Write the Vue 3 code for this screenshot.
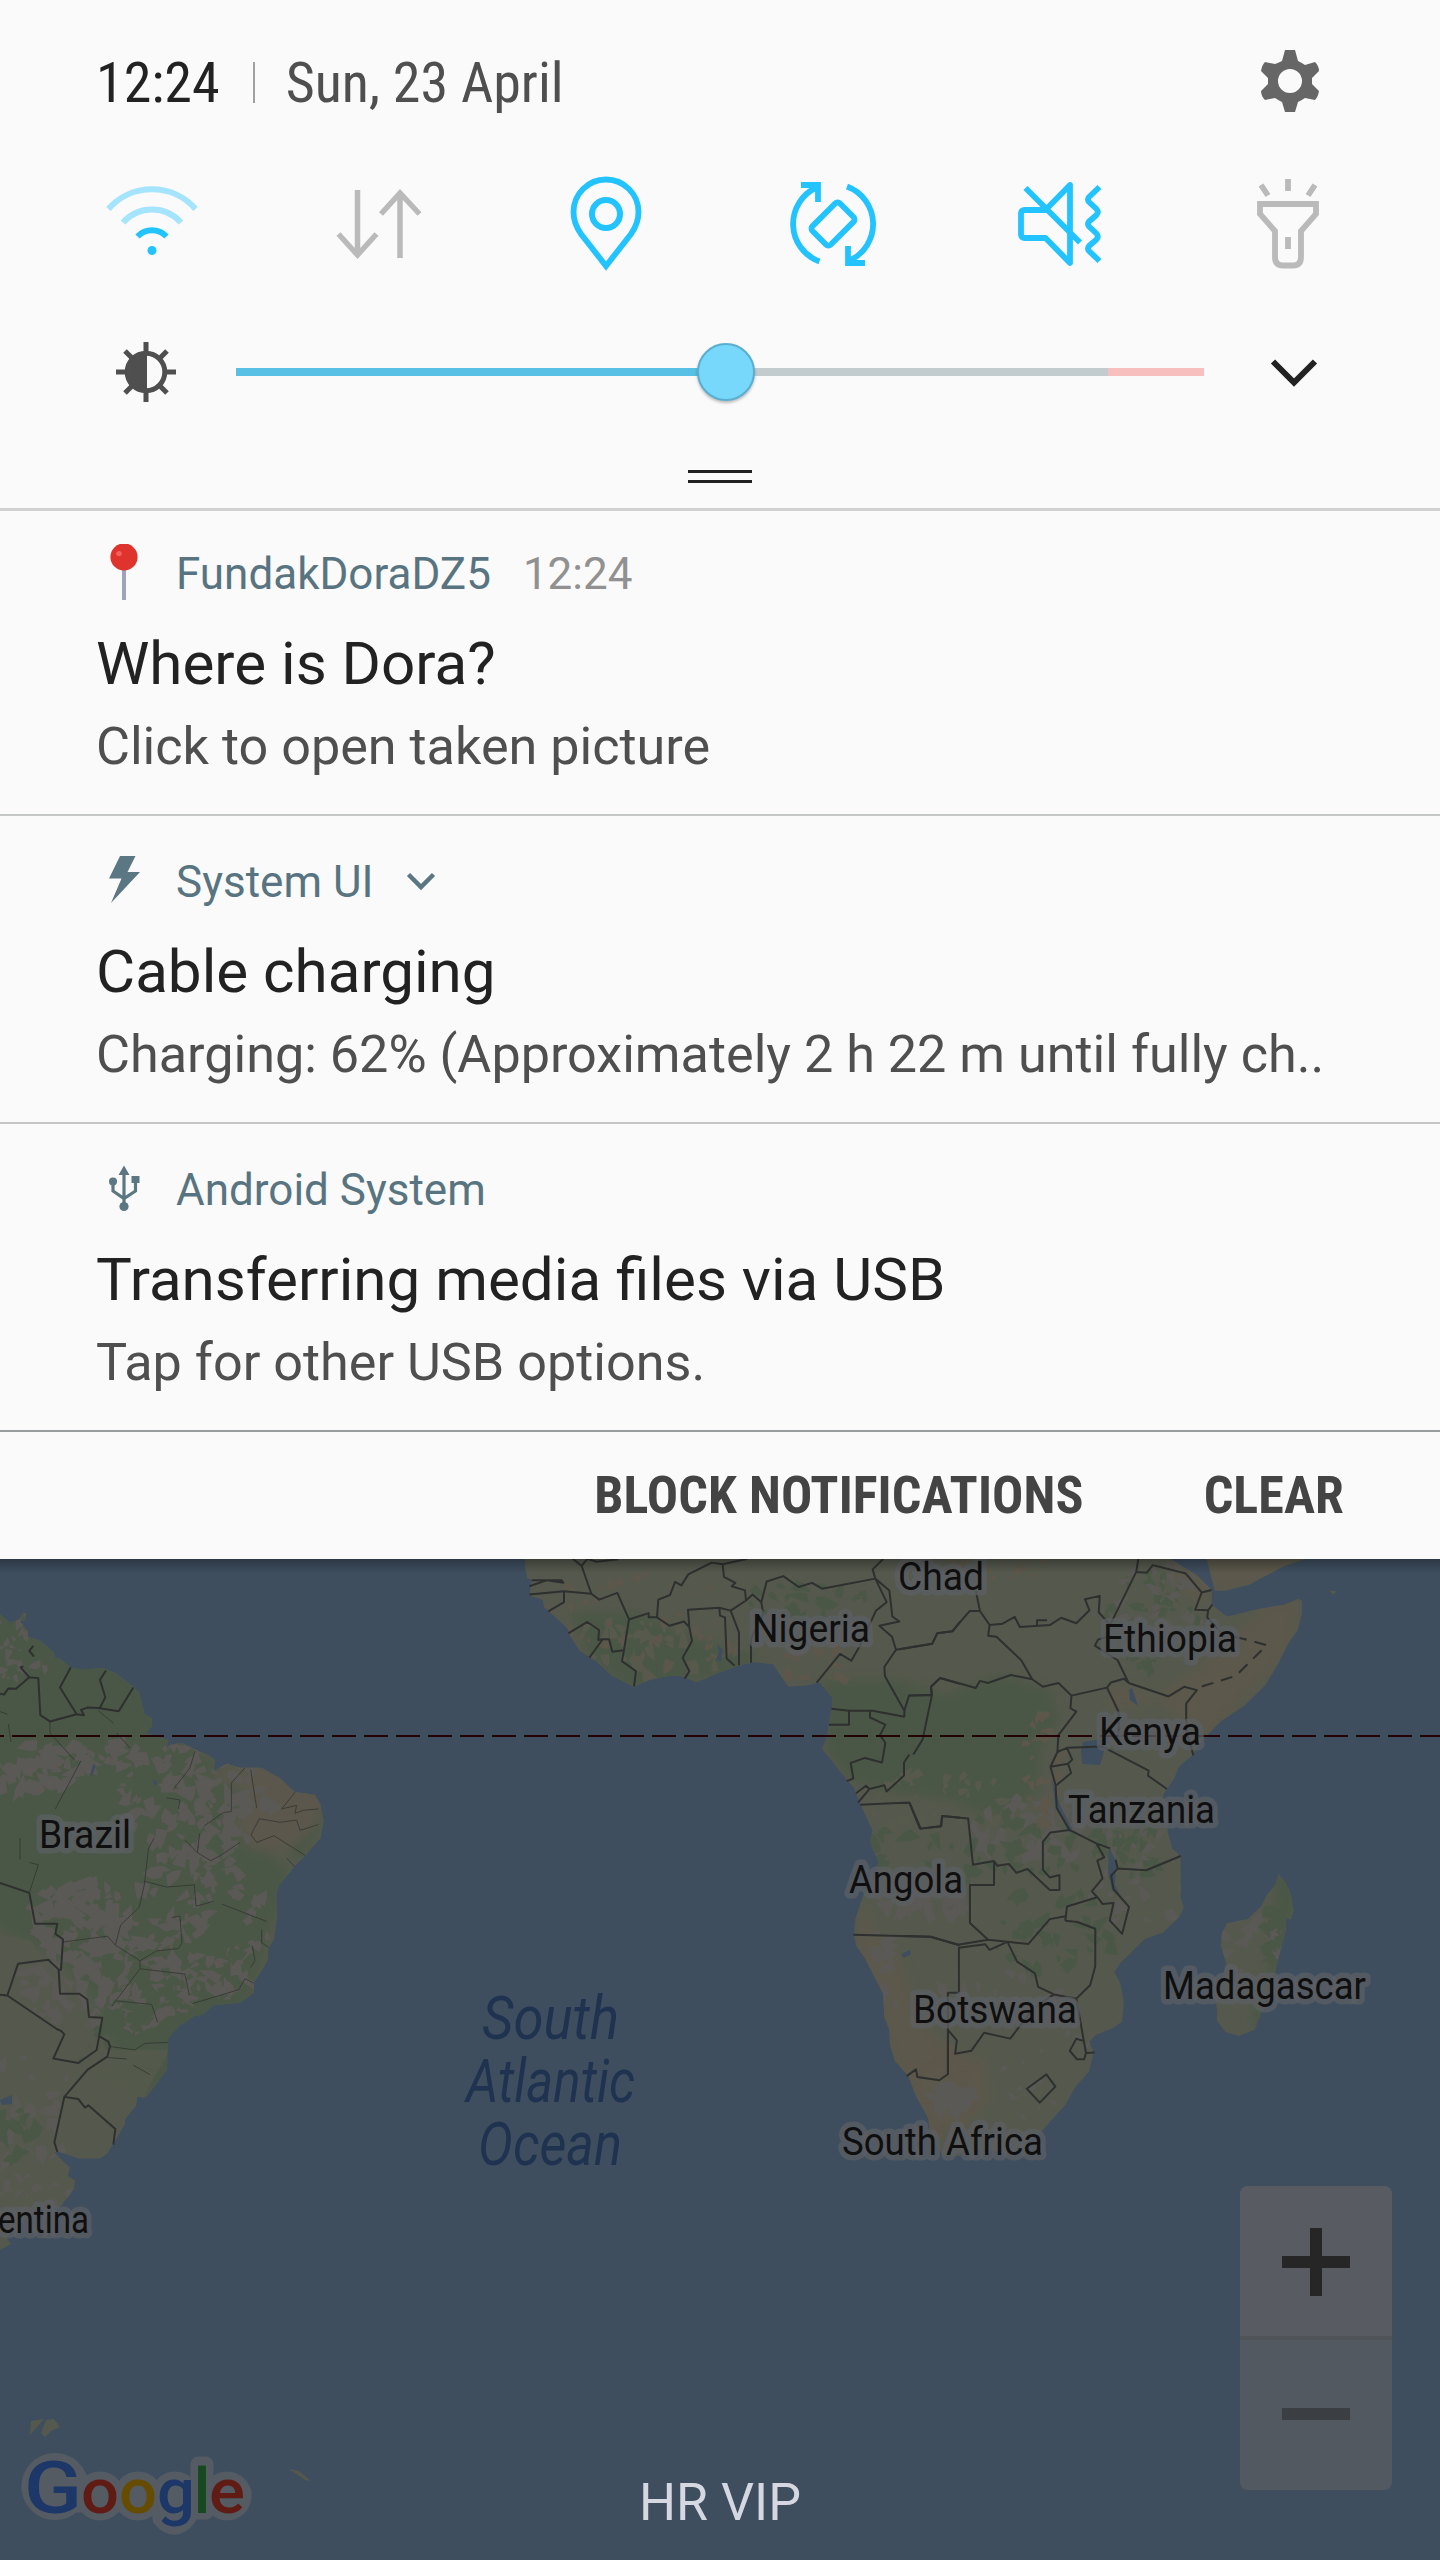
<script setup>
const notifications = [
  { id: 'dora', icon: 'pin', app: 'FundakDoraDZ5', time: '12:24', title: 'Where is Dora?', body: 'Click to open taken picture' },
  { id: 'charge', icon: 'bolt', app: 'System UI', expandable: true, title: 'Cable charging', body: 'Charging: 62% (Approximately 2 h 22 m until fully ch..' },
  { id: 'usb', icon: 'usb', app: 'Android System', title: 'Transferring media files via USB', body: 'Tap for other USB options.' },
]

const labels = [
  { text: 'Brazil', x: 39, y: 1848, w: 92 },
  { text: 'Argentina', x: -53, y: 2233, w: 142 },
  { text: 'Chad', x: 898, y: 1590, w: 86 },
  { text: 'Nigeria', x: 752, y: 1642, w: 118 },
  { text: 'Ethiopia', x: 1103, y: 1652, w: 134 },
  { text: 'Kenya', x: 1099, y: 1745, w: 102 },
  { text: 'Tanzania', x: 1068, y: 1823, w: 147 },
  { text: 'Angola', x: 849, y: 1893, w: 114 },
  { text: 'Botswana', x: 913, y: 2023, w: 164 },
  { text: 'Madagascar', x: 1163, y: 1999, w: 203 },
  { text: 'South Africa', x: 842, y: 2155, w: 201 },
]

const ocean = [
  { text: 'South', x: 482, y: 2039, w: 137 },
  { text: 'Atlantic', x: 466, y: 2102, w: 169 },
  { text: 'Ocean', x: 478, y: 2165, w: 144 },
]

const logo = [
  { ch: 'G', x: 24, w: 58, cls: 'cap blue' },
  { ch: 'o', x: 81, w: 38, cls: 'red' },
  { ch: 'o', x: 119, w: 38, cls: 'yellow' },
  { ch: 'g', x: 157, w: 38, cls: 'blue' },
  { ch: 'l', x: 193.5, w: 17, cls: 'green' },
  { ch: 'e', x: 209, w: 36, cls: 'red' },
]

// Coastlines: South America, western Africa, eastern Africa with Arabia and Madagascar, small islands.
const land = [
  { t: 'translate(0 1550) scale(.33333 .44643)', d: 'M0 143L30 163L60 155L68 140L78 143L78 155L60 160L82 180L85 195L120 202L162 230L165 243L178 242L212 263L250 268L310 264L350 277L400 306L418 320L433 366L455 377L455 395L440 410L470 418L505 425L500 445L475 468L510 437L545 432L600 452L622 458L645 470L640 495L682 478L720 488L785 488L838 510L885 542L945 548L962 572L971 607L962 645L915 685L885 708L838 750L829 770L831 825L822 872L805 892L803 920L762 970L762 992L720 1014L640 1020L608 1041L585 1043L540 1065L512 1087L503 1100L501 1165L437 1227L412 1224L408 1245L375 1275L375 1285L340 1330L322 1352L300 1363L235 1363L172 1347L163 1350L210 1383L203 1402L225 1412L222 1432L180 1472L100 1480L20 1540L32 1555L0 1568Z' },
  { t: 'translate(500 1550) scale(.33333 .42088)', d: 'M75 21L75 40L82 68L95 72L88 108L128 118L132 135L205 188L210 205L240 240L290 265L335 298L402 325L450 308L510 299L545 300L590 314L650 294L715 275L760 267L818 271L865 325L920 322L960 315L998 352L995 375L987 415L978 450L966 472L1040 545L1062 565L1080 603L1117 665L1110 695L1135 740L1120 790L1090 820L1065 880L1062 915L1068 940L1095 970L1150 1055L1153 1110L1168 1140L1170 1175L1185 1215L1225 1250L1250 1300L1285 1350L1290 1390L1330 1440L1380 1440L1380 21Z' },
  { t: 'translate(900 1550) scale(.34439 .42088)', d: 'M75 21L785 21L860 58L905 95L905 130L950 158L1040 140L1115 130L1158 116L1167 122L1167 150L1155 190L1125 225L1095 275L1060 322L1000 370L930 408L880 450L850 487L810 515L795 545L765 580L765 610L778 670L790 710L815 727L815 825L824 850L812 870L765 908L710 925L640 982L622 1003L640 1030L650 1075L645 1120L620 1135L570 1152L550 1168L562 1195L548 1240L510 1275L480 1318L410 1382L330 1430L200 1425L126 1440L87 1390ZM890 21L915 97L945 97L1015 82L1060 62L1115 38L1180 21ZM1245 96L1268 98L1258 106ZM1100 771L1120 790L1135 820L1143 858L1135 878L1120 875L1120 905L1108 940L1090 1000L1060 1075L1030 1140L983 1155L945 1145L920 1118L920 1090L912 1050L935 1020L948 985L932 940L935 910L950 886L1010 877L1050 845L1065 820L1090 795Z' },
  { t: 'translate(0 0)', d: 'M31 2421L44 2419L30 2435ZM46 2420L54 2419L60 2427L51 2431L45 2437L41 2433ZM289 2469L299 2471L311 2481L305 2480Z' },
]

// Vegetation patches: deterministic slivers scattered inside an ellipse.
function scatter(seed, cx, cy, rx, ry, count, size) {
  let s = seed * 7919
  const rnd = () => {
    s = (s * 16807) % 2147483647
    return s / 2147483647
  }
  let d = ''
  for (let i = 0; i < count; i++) {
    const a = rnd() * 6.283
    const r = Math.sqrt(rnd())
    const x = cx + Math.cos(a) * r * rx
    const y = cy + Math.sin(a) * r * ry
    const t = rnd() * 6.283
    const l = size * (0.4 + rnd())
    const p = [0, 1.1, 2.6, 3.8, 5.2].map((o, k) => {
      const q = l * (k % 2 ? 0.2 + rnd() * 0.25 : 0.45 + rnd() * 0.45)
      return (x + Math.cos(t + o) * q).toFixed(1) + ' ' + (y + Math.sin(t + o) * q).toFixed(1)
    })
    d += 'M' + p.join('L') + 'Z'
  }
  return d
}

const GREEN = '#4b5746'
const GREY = '#5b5955'
const BEIGE = '#57594c'
const SAND = '#5c574a'
const patches = [
  [11, 30, 1640, 40, 50, 40, 8, GREY],
  [23, 35, 1770, 50, 24, 45, 13, GREY],
  [31, 105, 1755, 40, 14, 26, 13, GREY],
  [47, 195, 1800, 75, 60, 110, 12, GREY],
  [59, 80, 1920, 50, 40, 80, 14, GREY],
  [61, 200, 1925, 70, 80, 110, 12, GREY],
  [73, 110, 1985, 90, 45, 100, 13, GREY],
  [79, 200, 1960, 70, 50, 40, 11, GREEN],
  [83, 130, 2045, 50, 40, 40, 11, GREEN],
  [89, 30, 2110, 50, 60, 24, 12, GREY],
  [97, 15, 2130, 20, 30, 16, 13, GREEN],
  [101, 30, 2200, 50, 30, 24, 8, GREY],
  [103, 640, 1650, 110, 30, 50, 10, BEIGE],
  [107, 640, 1620, 120, 50, 50, 8, SAND],
  [109, 800, 1600, 70, 16, 24, 12, GREEN],
  [113, 820, 1665, 40, 20, 24, 9, SAND],
  [127, 1000, 1565, 60, 14, 30, 7, SAND],
  [131, 1150, 1620, 45, 50, 50, 9, GREEN],
  [137, 1165, 1600, 50, 35, 36, 8, GREY],
  [139, 930, 1800, 90, 30, 40, 9, BEIGE],
  [149, 1030, 1830, 60, 35, 50, 12, GREY],
  [151, 980, 1850, 110, 40, 46, 12, GREEN],
  [157, 925, 1905, 50, 12, 26, 11, GREY],
  [163, 1045, 1765, 20, 60, 40, 9, SAND],
  [167, 1130, 1840, 40, 40, 36, 11, GREEN],
  [173, 1140, 1880, 50, 60, 36, 9, GREY],
  [179, 1050, 1930, 70, 40, 36, 11, GREEN],
  [181, 1000, 1990, 70, 25, 16, 11, GREY],
  [191, 880, 2000, 20, 70, 30, 12, GREY],
  [193, 945, 2090, 40, 45, 30, 13, SAND],
  [197, 950, 2100, 22, 14, 20, 14, GREY],
  [199, 1060, 2080, 60, 60, 24, 8, GREY],
  [211, 1260, 1930, 40, 50, 18, 12, GREY],
  [223, 1275, 1960, 14, 50, 26, 11, GREEN],
].map(([s, x, y, rx, ry, n, z, fill]) => ({ d: scatter(s, x, y, rx, ry, n, z), fill }))
</script>

<template>
  <main class="screen">
    <section class="quick">
      <header class="status">
        <span class="clock">12:24</span>
        <i class="bar"></i>
        <span class="date">Sun, 23 April</span>
        <svg class="gear" width="60" height="64" viewBox="-30 -32 60 64">
          <path fill="#666" fill-rule="evenodd" d="M-5 -31H5L8 -20Q12 -18 15 -16L25 -19Q29 -15 29 -10L22 -3V3L29 10Q28 16 25 19L15 17Q12 19 8 21L5 31H-5L-8 21Q-12 19 -15 17L-25 19Q-29 15 -29 10L-22 3V-3L-29 -10Q-28 -16 -25 -19L-15 -17Q-12 -18 -8 -20ZM0 -12A12 12 0 1 0 0 12A12 12 0 1 0 0 -12Z" />
        </svg>
      </header>

      <svg class="toggles" width="1440" height="110" viewBox="0 170 1440 110" fill="none" stroke="#22c3ff" stroke-width="6">
        <g>
          <path opacity=".4" d="M108.500 209A58 58 0 0 1 195.500 209M123 222.500A39 39 0 0 1 181 222.500" />
          <path d="M137.500 236.500A20 20 0 0 1 166.500 236.500" />
          <circle cx="152" cy="250.500" r="4.500" fill="#22c3ff" stroke="none" />
        </g>
        <path stroke="#bababa" stroke-width="5.500" d="M357.500 190V255M338.500 234L357.500 255L376.500 234M400 258V193M381 214L400 193L419.500 214" />
        <g>
          <path stroke-width="5.800" d="M606 266L581 234C576 227 573.500 220 573.500 212A32.500 32.500 0 0 1 638.500 212C638.500 220 636 227 631 234Z" />
          <circle cx="606" cy="214" r="14" />
        </g>
        <g stroke-width="5.800">
          <path d="M801 185H818V202M816.500 187.500A40 40 0 0 0 819.500 261.500M847 186.500A40 40 0 0 1 849.500 260.500M865 263H848V246" />
          <rect x="813.500" y="211" width="39" height="26" rx="3.500" transform="rotate(-45 833 224)" />
        </g>
        <g stroke-width="5.800" stroke-linejoin="round">
          <path d="M1070 185L1045.500 210H1025Q1021 210 1021 214V234Q1021 238 1025 238H1045.500L1070 263ZM1025.500 188L1080 242.500" />
          <path d="M1099.500 187L1089 197Q1087 199.500 1089 202L1096.500 209Q1099 212 1096.500 215L1089 221.500Q1087 224 1089 226.500L1096.500 233.500Q1099 236.500 1096.500 239.500L1089 246Q1087 248.500 1089 251L1099.500 261" />
        </g>
        <path stroke="#bababa" stroke-width="5.800" d="M1260 204H1316V214L1301 231V257Q1301 265.500 1293 265.500H1283Q1275 265.500 1275 257V231L1260 214ZM1288 237V249M1288 179V191M1261 185L1268 195.500M1315 185L1308 195.500" />
      </svg>

      <div class="brightness">
        <svg width="60" height="60" viewBox="-30 -30 60 60" fill="none" stroke="#4f4f4f" stroke-width="5">
          <path d="M0 -30V-19M0 30V19M-30 0H-19M30 0H19M-21 -21L-13 -13M21 -21L13 -13M-21 21L-13 13M21 21L13 13" />
          <circle r="18.800" />
          <path d="M1 -18A18 18 0 0 0 1 18Z" fill="#4f4f4f" stroke="none" />
        </svg>
        <div class="track">
          <i class="on"></i><i class="off"></i><i class="hot"></i>
          <b class="thumb"></b>
        </div>
        <svg class="expand" width="50" height="30" viewBox="0 0 50 30" fill="none" stroke="#222" stroke-width="6">
          <path d="M4 4.500L25 25.500L46 4.500" />
        </svg>
      </div>
      <div class="handle"></div>
    </section>

    <article v-for="n in notifications" :key="n.id" class="note">
      <div class="head">
        <svg class="glyph" width="50" height="60" viewBox="-25 -30 50 60">
          <template v-if="n.icon === 'pin'">
            <path d="M0 -5V26" stroke="#9fa3b8" stroke-width="4" />
            <circle cy="-17" r="13.600" fill="#df342e" />
            <ellipse cx="-5" cy="-20.500" rx="2.800" ry="2.600" fill="#f65f5c" />
          </template>
          <path v-else-if="n.icon === 'bolt'" fill="#5a7783" d="M-4 -26H11.500L3.500 -10H16L-13 21L-2.500 -3.500H-15Z" />
          <g v-else fill="#5a7783">
            <path d="M0 -24.500L5.500 -15H-5.500ZM7.500 -14H15.500V-7H7.500Z" />
            <circle cx="-11" cy="-8.500" r="4" />
            <circle cx="0" cy="16.500" r="4.600" />
            <path d="M0 -17V16M-11 -7V1L0 8.500L11.500 1V-8" fill="none" stroke="#5a7783" stroke-width="3.200" />
          </g>
        </svg>
        <span class="app">{{ n.app }}</span>
        <span v-if="n.time" class="time">{{ n.time }}</span>
        <svg v-if="n.expandable" class="more" width="30" height="20" viewBox="0 0 30 20" fill="none" stroke="#5a7783" stroke-width="4.500">
          <path d="M2.500 2.500L15 15L27.500 2.500" />
        </svg>
      </div>
      <h2>{{ n.title }}</h2>
      <p>{{ n.body }}</p>
    </article>

    <footer class="actions">
      <span class="block">BLOCK NOTIFICATIONS</span>
      <span class="clear">CLEAR</span>
    </footer>

    <section class="map">
      <svg class="canvas" width="1440" height="1001" viewBox="0 1559 1440 1001">
        <defs>
          <clipPath id="coast">
            <path v-for="(l, i) in land" :key="i" :d="l.d" :transform="l.t" />
          </clipPath>
          <filter id="soft" x="-10%" y="-10%" width="120%" height="120%" color-interpolation-filters="sRGB"><feGaussianBlur stdDeviation="5" /></filter>
        </defs>
        <path v-for="(l, i) in land" :key="i" :d="l.d" :transform="l.t" fill="#55594d" />
        <g clip-path="url(#coast)">
          <g filter="url(#soft)">
            <path fill="#4b5746" d="M-20 1590L140 1670L180 1740L240 1775L235 1830L290 1870L250 2000L165 2090L130 2100L100 2010L60 1960L0 1930L-20 1920Z" />
            <path fill="#4b5746" d="M318 1800L330 1815L300 1860L285 1850L310 1825Z" />
            <path fill="#5b574c" d="M205 1775L255 1762L325 1795L318 1825L290 1850L250 1850L235 1820L248 1790Z" />
            <path fill="#4b5746" d="M570 1612L640 1612L700 1640L760 1655L730 1675L630 1690L590 1660Z" />
            <path fill="#4b5746" d="M820 1680L900 1680L945 1695L1000 1675L1050 1690L1060 1720L1040 1750L1040 1790L1000 1820L950 1800L880 1790L850 1780L825 1750Z" />
            <path fill="#5c584b" d="M1110 1685L1160 1695L1220 1650L1270 1600L1300 1600L1290 1650L1210 1735L1180 1720L1160 1700L1110 1710ZM1195 1555H1300V1590H1200ZM1165 1560L1200 1580L1210 1610L1180 1590Z" />
            <path fill="#5c584b" d="M860 1900L880 1935L900 1960L915 2000L945 2050L985 2060L990 2100L960 2130L930 2130L890 2050L860 1970Z" />
            <path fill="#4b5746" d="M1275 1870L1300 1880L1290 1930L1260 2030L1250 2020L1272 1950Z" />
          </g>
          <path v-for="(p, i) in patches" :key="i" :d="p.d" :fill="p.fill" />
          <path fill="#55594d" d="M0 1975L40 1965L85 2010L90 2050L65 2085L55 2140L110 2150L135 2115L150 2085L170 2050L100 2050L80 2000L30 1940L0 1935Z" opacity=".75" />
        </g>
        <path fill="#3e4e5f" d="M93 1764L96 1766L92 1776L90 1775ZM152 1779L158 1782L155 1786ZM0 2100L12 2095L12 2104L2 2105ZM717 1644L723 1650L721 1662L716 1660L719 1652ZM901 1954L910 1950L911 1954L904 1958ZM1083 1742L1108 1738L1100 1765L1082 1764L1081 1750ZM1129 1690L1132 1688L1138 1706L1130 1700ZM1051 1777L1060 1805L1074 1833L1069 1832L1056 1808ZM1109 1847L1116 1862L1115 1885L1122 1899L1112 1890L1108 1873Z" />

        <g fill="none" stroke="#2e302f" stroke-linejoin="round">
          <g transform="translate(0 1550) scale(.33333 .44643)">
            <path class="line" d="M0 322L12 324L25 310L48 311L88 285L62 263L70 260M88 285L115 287L121 370L150 384L230 368L180 308L212 263M230 368L252 370L243 358L262 353L295 354L356 361L400 308M298 356L316 330L300 291L318 270M100 215L88 226L102 239M0 746L88 768L105 837L172 837L166 860L189 872L183 940L176 940L145 918L54 927L22 998L0 996M22 998L170 1073L183 1077L193 1085L160 1139L235 1149L290 1120L307 1048L267 1046L262 1007L238 994L180 994L176 940M300 1090L325 1101L330 1112L322 1135L263 1164L193 1225L163 1327L172 1348M193 1225L235 1230L255 1249L265 1244L346 1297L340 1332" />
            <path class="thin" d="M150 384V410L225 472M243 472L166 580M0 362L22 368M25 390L33 430M295 360L340 388M350 410L390 444M585 450L570 488L520 536M735 488L694 522V586L670 588L613 618M500 555L540 560L535 580M752 492L770 578M885 543L845 580L890 572L885 590L910 583L955 580M778 602L840 610L890 605L900 628L955 615M778 602L753 638L770 655L822 640L915 684M599 635L592 678L555 650M592 678L632 696L662 684L720 655M462 645L445 670L433 750L418 800L362 840L346 885L322 865L190 878M346 885L420 920L470 898L535 893L546 880L540 820L515 823M433 742L500 755L583 750L588 798L640 787M665 793L800 832M420 920V938L335 1022M420 938L555 950L568 998M578 1016L716 985L735 960L760 970M350 1010L455 1018L473 1058M330 1112L405 1120L435 1105L503 1103M325 1137L380 1140M400 1154L450 1175M785 850L785 880L805 890M757 887L765 920L752 935M88 700L115 705L88 768M60 645V693M860 690L885 710" />
          </g>
          <g transform="translate(500 1550) scale(.33333 .42088)">
            <path class="line" d="M218 21L245 38L274 104L192 98L88 106M88 86L140 72L190 78L185 72L95 72M192 98V124L145 146M245 38L262 21L290 28L355 22M274 104L298 118L352 102L387 165L446 150V160L471 160L475 118L510 107L525 76L544 84L565 58L635 30L668 34L742 21M387 165L372 238L366 264L408 288L402 324M372 238L337 242L327 212L308 212L268 256M308 212L295 214L297 190L262 171L205 198M471 160L508 180L552 170L568 183L576 216L548 256L568 288L554 306M568 183L564 142L658 137L692 144L738 120L758 106L784 124L800 75L850 62L896 88L936 78L966 92L1126 68L1118 46L1150 21M668 34L672 64L706 78L695 86L735 96L738 120M658 137L660 156L675 160L680 258L704 275M692 144L717 196V274M784 124L790 152L753 210V268M950 315L1020 247L1054 263L1078 230L1128 144L1160 124L1126 68L1168 96L1177 158L1198 170L1138 180L1176 206L1188 237L1153 278L1155 300L1213 382L1227 346L1296 344L1268 450L1240 486M1188 237L1297 223L1312 198L1358 193L1380 170M1296 344L1293 325L1320 304L1380 318M994 377L1047 382L1118 382L1213 396V382M1047 382V415H987M1110 384V398L1156 415L1140 440L1156 458L1146 505L1095 494L1052 506L1060 543L1040 549M1068 578L1098 560L1108 568L1153 559L1160 574L1212 536V505L1228 486M1108 568L1074 600M1080 605L1228 600L1260 662L1322 657L1327 632L1380 636M1060 914L1290 919L1380 939M1220 1250L1248 1234L1252 1252L1318 1260L1344 1245V1140" />
          </g>
          <g transform="translate(900 1550) scale(.34439 .42088)">
            <path class="line" d="M220 95L232 145L202 145L152 193L108 198L93 223L0 236M232 145L260 178L256 204L280 206L352 262L384 307L322 297L255 316L232 311L220 328L117 304L90 325L92 345L25 346M260 178L298 175L333 159L348 183L436 178L468 161L512 174L550 143L537 117L580 109L577 148L610 178L686 52L692 21M398 178V167H427M686 52L717 54L734 36L830 56L876 101L905 95M876 101L857 142L895 143L907 130M895 143L892 160L930 195M605 205L575 213L566 227L632 262L664 316L780 348L825 325L862 333L831 365V430L852 488M664 316L650 306L612 315L601 327L498 346L460 316L415 325L384 307M601 327L635 385V440M498 346L495 376L512 384L460 440L457 480L437 515L452 560L455 613L492 665L437 671L415 693V760L435 778L463 772V808H435L370 758L338 767L316 746L282 750L273 739L212 748L198 638L122 632L120 656L60 662L28 601H0M457 480L485 470L588 467L722 524L720 536L775 568M485 470L500 498L488 508L437 515M488 508L497 530L452 560M492 665L570 697L610 709M570 697L593 730L573 738L588 780L557 811L573 825L485 847L480 881M573 825L588 841L620 839L609 880L645 912L665 848L620 806L613 774L632 757L626 736M632 757L715 761L815 727M273 739V796H203V886L256 926L312 931L373 936L435 877L480 870M480 881L515 884L567 900V989L552 1034L512 1066L447 1056L401 1038L392 1006L340 978L312 931L260 950L248 937L171 945V1052H139V1245M0 917L90 919L168 938L256 926M447 1056L388 1088L320 1161L244 1147L207 1190L160 1197L165 1165L139 1140M512 1066L540 1195L565 1194M540 1195L535 1210H514L493 1190L512 1161L530 1166M425 1246L451 1275L406 1313L368 1280Z" />
            <path class="line" stroke-dasharray="12 8" d="M973 206L1065 226L975 299L866 327" />
          </g>
        </g>
        <path d="M-20 1736H1440" stroke="#230206" stroke-width="2" stroke-dasharray="24 8" />

        <g class="place">
          <text v-for="l in labels" :key="l.text" :x="l.x" :y="l.y" :textLength="l.w" lengthAdjust="spacingAndGlyphs">{{ l.text }}</text>
        </g>
        <g class="ocean">
          <text v-for="l in ocean" :key="l.text" :x="l.x" :y="l.y" :textLength="l.w" lengthAdjust="spacingAndGlyphs">{{ l.text }}</text>
        </g>
        <g class="halo">
          <circle cx="55" cy="2486.500" r="26" />
          <circle cx="100" cy="2496" r="17" />
          <circle cx="138" cy="2496" r="17" />
          <circle cx="175" cy="2496" r="17" />
          <circle cx="227" cy="2496" r="17" />
          <path d="M160 2519Q175 2536 189 2518V2490H160ZM198 2464H206V2512H198ZM60 2500H220V2505H60ZM227 2485L244 2492L240 2500Z" />
        </g>
        <g class="logo">
          <text v-for="g in logo" :key="g.x" :class="g.cls" :x="g.x" y="2513" :textLength="g.w" lengthAdjust="spacingAndGlyphs">{{ g.ch }}</text>
        </g>
      </svg>
      <div class="shade"></div>
      <div class="zoom">
        <div class="in"><svg width="68" height="68" viewBox="0 0 68 68"><path fill="#262626" d="M28 0H40V28H68V40H40V68H28V40H0V28H28Z" /></svg></div>
        <div class="out"><svg width="68" height="12" viewBox="0 0 68 12"><path fill="#3b3e42" d="M0 0H68V12H0Z" /></svg></div>
      </div>
      <div class="carrier">HR VIP</div>
    </section>
  </main>
</template>

<style>
body {
  margin: 0;
  background: #3e4e5f;
}
</style>

<style scoped>
.screen {
  width: 1440px;
  height: 2560px;
  overflow: hidden;
  background: #fafafa;
  font-family: Roboto, "Liberation Sans", sans-serif;
}
.quick {
  box-sizing: border-box;
  height: 511px;
  padding-top: 48px;
  border-bottom: 3px solid #d0d0d0;
}
.status {
  display: flex;
  align-items: center;
  height: 66px;
  padding: 0 120px 0 96px;
  font-family: "Roboto Condensed", Roboto, sans-serif;
  font-stretch: 75%;
  font-size: 56px;
  line-height: 66px;
  white-space: nowrap;
}
.clock { padding-top: 3px; color: #222; }
.bar {
  width: 2px;
  height: 41px;
  margin: 2px 31px 0 33px;
  background: #a0a0a0;
}
.date { padding-top: 3px; color: #4f4f4f; }
.gear { margin: -1px 0 0 auto; }
.toggles {
  display: block;
  margin-top: 56px;
}
.brightness {
  display: flex;
  align-items: center;
  height: 60px;
  margin-top: 62px;
  padding: 0 121px 0 116px;
}
.track {
  position: relative;
  display: flex;
  width: 968px;
  height: 8px;
  margin-left: 60px;
}
.on { width: 490px; background: #57c0e4; }
.off { width: 382px; background: #c2cccf; }
.hot { flex: 1; background: #f7bfbd; }
.thumb {
  position: absolute;
  box-sizing: border-box;
  left: 461px;
  top: -25px;
  width: 58px;
  height: 58px;
  border: 2px solid #5aafd1;
  border-radius: 50%;
  background: #78d8fb;
  box-shadow: 0 2px 3px rgba(0, 0, 0, 0.25);
}
.expand { margin-left: auto; }
.handle {
  box-sizing: border-box;
  width: 64px;
  height: 13px;
  margin: 68px auto 0;
  border-top: 3px solid #222;
  border-bottom: 3px solid #222;
}
.note {
  box-sizing: border-box;
  height: 308px;
  padding: 36px 96px 0;
  border-bottom: 2px solid #c4c6c6;
  white-space: nowrap;
}
.note:first-of-type { height: 305px; padding-top: 33px; }
.note:last-of-type { border-bottom-color: #999c9c; }
.head {
  display: flex;
  align-items: center;
  height: 60px;
  font-size: 44px;
  line-height: 60px;
}
.glyph { margin-left: 3px; }
.app { margin-left: 27px; color: #587481; }
.time { margin-left: 32px; color: #919191; }
.more { margin-left: 33px; }
h2 {
  margin: 22px 0 0;
  color: #222;
  font-size: 60.15px;
  font-weight: 400;
  line-height: 76px;
}
p {
  margin: 12px 0 0;
  color: #4f4f4f;
  font-size: 52.15px;
  line-height: 66px;
}
.actions {
  display: flex;
  justify-content: flex-end;
  gap: 120px;
  height: 127px;
  padding-right: 96px;
  color: #444;
  font-family: "Roboto Condensed", Roboto, sans-serif;
  font-stretch: 75%;
  font-size: 52px;
  font-weight: 700;
  line-height: 128px;
  letter-spacing: 0.1px;
  white-space: nowrap;
}
.map {
  position: relative;
  height: 1001px;
  background: #3e4e5f;
}
.canvas { display: block; }
.line { stroke-width: 2px; vector-effect: non-scaling-stroke; }
.thin { stroke-width: 1px; vector-effect: non-scaling-stroke; opacity: 0.7; }
.place text {
  fill: #0f0f0f;
  stroke: rgba(92, 95, 99, 0.75);
  stroke-width: 11px;
  stroke-linejoin: round;
  paint-order: stroke;
  font-size: 38px;
}
.ocean text {
  fill: #1f3350;
  font-size: 60px;
  font-style: italic;
}
.logo { font-size: 63px; font-weight: 500; }
.logo .cap { font-size: 73px; }
.halo { fill: #555b62; stroke: #555b62; stroke-width: 15px; stroke-linejoin: round; }
.blue { fill: #1c3768; }
.red { fill: #601b15; }
.yellow { fill: #664c00; }
.green { fill: #17481f; }
.shade {
  position: absolute;
  inset: 0 0 auto;
  height: 14px;
  background: linear-gradient(rgba(0, 0, 0, 0.3), transparent);
}
.zoom {
  position: absolute;
  left: 1240px;
  top: 627px;
  width: 152px;
  height: 304px;
  border-radius: 8px;
  overflow: hidden;
  background: #525961;
}
.in, .out {
  display: flex;
  align-items: center;
  justify-content: center;
  height: 152px;
}
.in {
  box-sizing: border-box;
  padding-top: 2px;
  border-bottom: 2px solid #505458;
  background: #585b62;
}
.out {
  box-sizing: border-box;
  padding-bottom: 2px;
  border-top: 2px solid #505458;
}
.carrier {
  position: absolute;
  inset: 918px 0 auto;
  text-align: center;
  color: #d5d8e0;
  font-size: 52px;
  line-height: 52px;
}
</style>
